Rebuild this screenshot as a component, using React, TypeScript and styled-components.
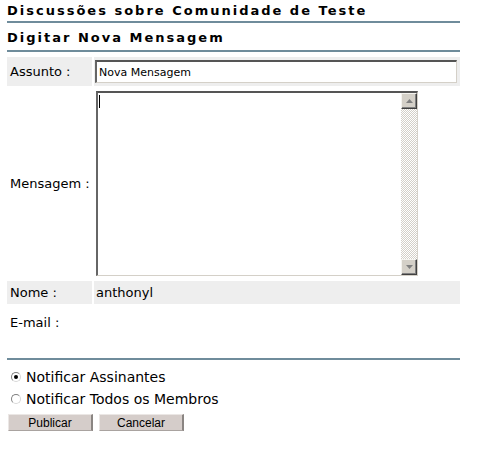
import React from 'react';
import styled, { createGlobalStyle } from 'styled-components';

const GlobalStyle = createGlobalStyle`
  body {
    margin: 0;
    background: #fff;
    font-family: "DejaVu Sans", Verdana, sans-serif;
    color: #000;
  }
`;

const RULE = '#6f8c9b';

function App() {
  return (
    <Page>
      <GlobalStyle />
      <Title>Discussões sobre Comunidade de Teste</Title>
      <SubTitle>Digitar Nova Mensagem</SubTitle>

      <FormGrid>
        <Label $shaded>Assunto :</Label>
        <Field $shaded>
          <TextInput defaultValue="Nova Mensagem" />
        </Field>

        <Label $tall>Mensagem :</Label>
        <Field $tall>
          <TextBox>
            <Editor />
            <Caret />
            <ScrollBar>
              <ScrollButton>
                <Arrow viewBox="0 0 7 4">
                  <path d="M0 4 L3.5 0 L7 4 Z" />
                </Arrow>
              </ScrollButton>
              <Track />
              <ScrollButton>
                <Arrow viewBox="0 0 7 4">
                  <path d="M0 0 L7 0 L3.5 4 Z" />
                </Arrow>
              </ScrollButton>
            </ScrollBar>
          </TextBox>
        </Field>

        <Label $shaded>Nome :</Label>
        <Field $shaded>
          <Value>anthonyl</Value>
        </Field>

        <Label $roomy>E-mail :</Label>
        <Field $roomy />
      </FormGrid>

      <Rule />

      <RadioList>
        <RadioRow>
          <Radio $checked />
          Notificar Assinantes
        </RadioRow>
        <RadioRow>
          <Radio />
          Notificar Todos os Membros
        </RadioRow>
      </RadioList>

      <Buttons>
        <Button>Publicar</Button>
        <Button>Cancelar</Button>
      </Buttons>
    </Page>
  );
}

export default App;

const Page = styled.div`
  width: 453px;
  padding-left: 7px;
`;

const Title = styled.h1`
  margin: 0;
  padding: 3px 0 2px;
  font: bold 13px/16px "DejaVu Sans", Verdana, sans-serif;
  letter-spacing: 2px;
  border-bottom: 2px solid ${RULE};
`;

const SubTitle = styled(Title)`
  padding: 7px 0 4px;
`;

const FormGrid = styled.div`
  display: grid;
  grid-template-columns: 85px 1fr;
  gap: 2px;
  margin-top: 5px;
  font-size: 13px;
`;

type CellProps = { $shaded?: boolean; $tall?: boolean; $roomy?: boolean };

const Label = styled.div<CellProps>`
  display: flex;
  align-items: center;
  padding-left: 3px;
  background: ${(p) => (p.$shaded ? '#eeeeee' : 'transparent')};
  min-height: ${(p) => (p.$roomy ? '32px' : p.$shaded ? '23px' : '0')};
`;

const Field = styled.div<CellProps>`
  display: flex;
  align-items: center;
  background: ${(p) => (p.$shaded ? '#eeeeee' : 'transparent')};
  padding: ${(p) => (p.$tall ? '3px 0' : '0')};
`;

const TextInput = styled.input`
  box-sizing: border-box;
  width: 362px;
  height: 23px;
  margin: 3px 0 3px 1px;
  padding: 0 2px;
  font: 11px "DejaVu Sans", Verdana, sans-serif;
  color: #000;
  background: #fff;
  border-style: solid;
  border-width: 2px 1px 1px 2px;
  border-color: #555 #d4d0c8 #d4d0c8 #666;
  box-shadow: inset 0 0 0 0 #fff;
  outline: none;
`;

const TextBox = styled.div`
  position: relative;
  box-sizing: border-box;
  display: flex;
  width: 322px;
  height: 185px;
  margin-left: 2px;
  border-style: solid;
  border-width: 2px 1px 1px 2px;
  border-color: #555 #d4d0c8 #d4d0c8 #666;
  background: #fff;
`;

const Editor = styled.textarea`
  flex: 1;
  border: none;
  resize: none;
  outline: none;
  padding: 0;
  background: transparent;
`;

const Caret = styled.span`
  position: absolute;
  left: 1px;
  top: 2px;
  width: 1px;
  height: 13px;
  background: #000;
`;

const ScrollBar = styled.div`
  display: flex;
  flex-direction: column;
  width: 16px;
`;

const ScrollButton = styled.div`
  box-sizing: border-box;
  height: 16px;
  display: flex;
  align-items: center;
  justify-content: center;
  background: #d4d0c8;
  border-style: solid;
  border-width: 1px;
  border-color: #f4f3ef #404040 #404040 #f4f3ef;
  box-shadow: inset -1px -1px 0 #808080;
`;

const Arrow = styled.svg`
  width: 7px;
  height: 4px;
  fill: #808080;
`;

const Track = styled.div`
  flex: 1;
  background-color: #fff;
  background-image: conic-gradient(#d4d0c8 25%, #fff 0 50%, #d4d0c8 0 75%, #fff 0);
  background-size: 2px 2px;
`;

const Value = styled.span`
  padding-left: 2px;
`;

const Rule = styled.div`
  margin-top: 20px;
  height: 2px;
  background: ${RULE};
`;

const RadioList = styled.div`
  margin-top: 6px;
`;

const RadioRow = styled.label`
  display: flex;
  align-items: center;
  height: 22px;
  font-size: 14px;
`;

const Radio = styled.span<{ $checked?: boolean }>`
  position: relative;
  box-sizing: border-box;
  width: 10px;
  height: 10px;
  margin: 0 5px 0 4px;
  border-radius: 50%;
  border: 1px solid;
  border-color: #808080 #d8d8d8 #d8d8d8 #808080;
  background: #fff;

  &::after {
    content: '';
    display: ${(p) => (p.$checked ? 'block' : 'none')};
    position: absolute;
    left: 2px;
    top: 2px;
    width: 4px;
    height: 4px;
    border-radius: 50%;
    background: #000;
  }
`;

const Buttons = styled.div`
  display: flex;
  gap: 6px;
  margin-top: 4px;
  padding-left: 1px;
`;

const Button = styled.button`
  box-sizing: border-box;
  width: 85px;
  height: 17px;
  padding: 0;
  font: 12px "Liberation Sans", Arial, sans-serif;
  color: #000;
  background: #d5cdca;
  border-style: solid;
  border-width: 1px 2px 1px 1px;
  border-color: #ebe7e5 #8a8582 #a9a3a0 #ebe7e5;
`;
